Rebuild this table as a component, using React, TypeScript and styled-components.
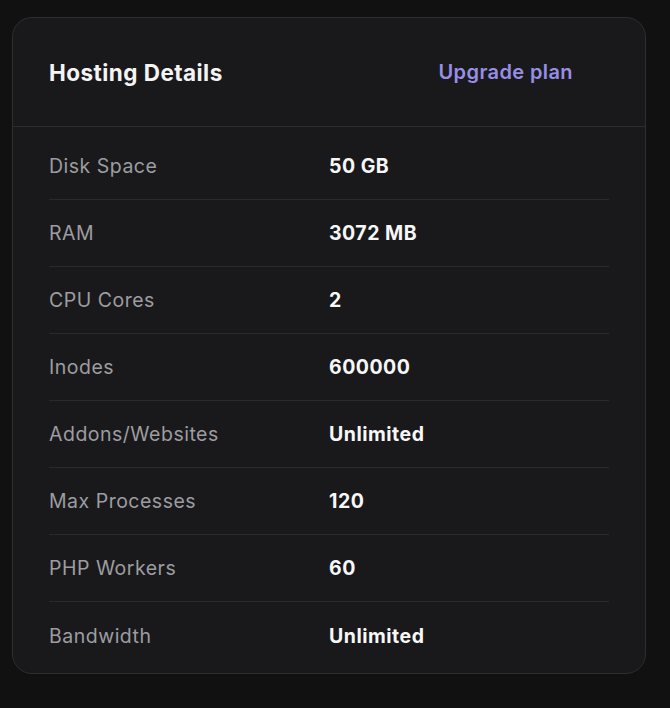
import React from "react";
import styled, { createGlobalStyle } from "styled-components";

const Global = createGlobalStyle`
  html, body { margin: 0; padding: 0; background: #111112; }
  body { font-family: Inter, "Noto Sans", sans-serif; }
  * { box-sizing: border-box; }
`;

const Page = styled.div`
  padding: 17px 24px 34px 12px;
  min-height: 708px;
`;

const Card = styled.section`
  width: 634px;
  background: #19191b;
  border: 1px solid #2e2e31;
  border-radius: 20px;
  overflow: hidden;
`;

const Header = styled.header`
  display: flex;
  align-items: center;
  justify-content: space-between;
  height: 109px;
  padding: 0 72px 0 36px;
  border-bottom: 1px solid #2c2c2f;
`;

const Title = styled.h2`
  margin: 0;
  font-size: 22.5px;
  font-weight: 700;
  color: #f4f4f5;
  letter-spacing: 0.45px;
`;

const Upgrade = styled.a`
  font-size: 20px;
  font-weight: 600;
  color: #978fe6;
  letter-spacing: 0.4px;
  text-decoration: none;
  cursor: pointer;
`;

const List = styled.dl`
  margin: 0;
  padding: 6px 36px 4px 36px;
`;

const Row = styled.div<{ $last?: boolean }>`
  display: grid;
  grid-template-columns: 1fr 1fr;
  align-items: center;
  height: 67px;
  border-bottom: ${(p) => (p.$last ? "none" : "1px solid #2a2a2d")};
`;

const Label = styled.dt`
  font-size: 19.5px;
  font-weight: 400;
  letter-spacing: 0.5px;
  color: #9d9da1;
`;

const Value = styled.dd`
  margin: 0;
  font-size: 19.5px;
  font-weight: 700;
  letter-spacing: 0.5px;
  color: #f7f7f8;
`;

const rows: [string, string][] = [
  ["Disk Space", "50 GB"],
  ["RAM", "3072 MB"],
  ["CPU Cores", "2"],
  ["Inodes", "600000"],
  ["Addons/Websites", "Unlimited"],
  ["Max Processes", "120"],
  ["PHP Workers", "60"],
  ["Bandwidth", "Unlimited"],
];

export default function App() {
  return (
    <>
      <Global />
      <Page>
        <Card>
          <Header>
            <Title>Hosting Details</Title>
            <Upgrade>Upgrade plan</Upgrade>
          </Header>
          <List>
            {rows.map(([k, v], i) => (
              <Row key={k} $last={i === rows.length - 1}>
                <Label>{k}</Label>
                <Value>{v}</Value>
              </Row>
            ))}
          </List>
        </Card>
      </Page>
    </>
  );
}
